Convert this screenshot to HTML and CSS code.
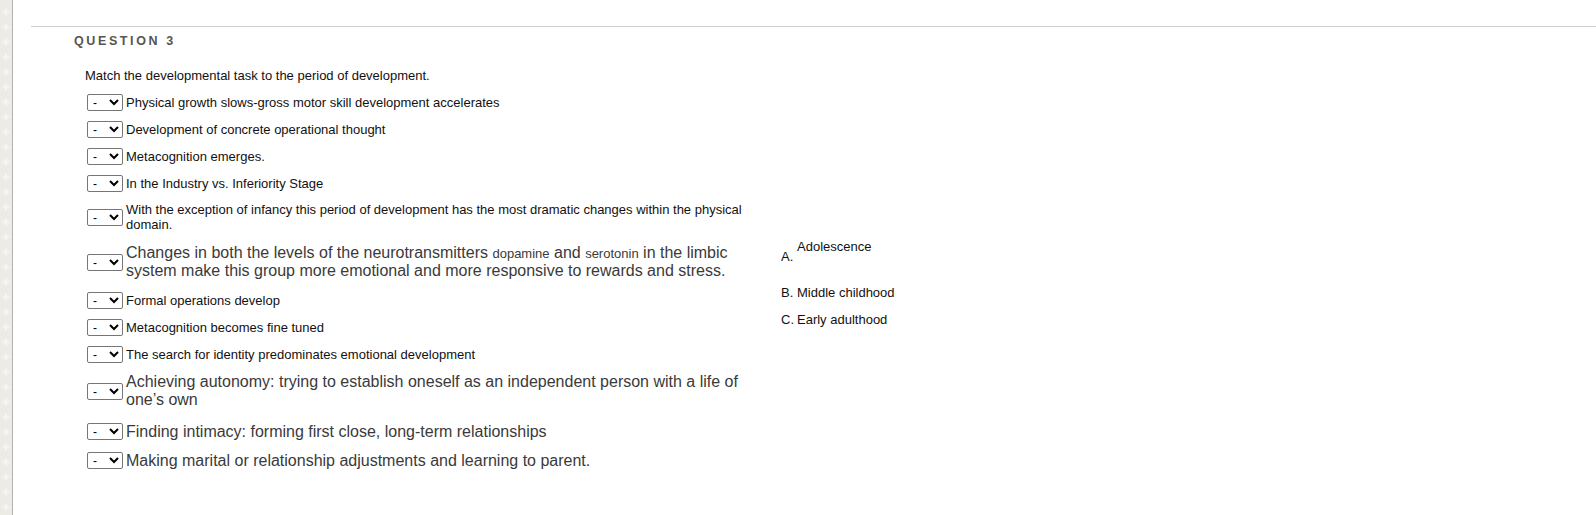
FILE: index.html
```html
<!DOCTYPE html>
<html lang="en">
<head>
<meta charset="utf-8">
<title>Question 3</title>
<link rel="stylesheet" href="styles.css">
</head>
<body>
<div class="page">
  <aside class="rail">
    <svg class="rail-art" width="12" height="515" aria-hidden="true">
      <defs>
        <pattern id="plus" x="0" y="4.5" width="12" height="15" patternUnits="userSpaceOnUse">
          <rect x="2.5" y="6.5" width="7" height="2" fill="#f6f5f1"/>
          <rect x="5" y="4" width="2" height="7" fill="#f6f5f1"/>
        </pattern>
      </defs>
      <rect width="12" height="515" fill="url(#plus)"/>
    </svg>
  </aside>
  <main class="main">
    <div class="rule"></div>
    <section class="question">
      <h3 class="qtitle">QUESTION 3</h3>
      <p class="prompt">Match the developmental task to the period of development.</p>
      <div class="match">
        <div class="items">
          <div class="row"><select class="pick"><option>-</option><option>A</option><option>B</option><option>C</option></select><span class="label">Physical growth slows-gross motor skill development accelerates</span></div>
          <div class="row"><select class="pick"><option>-</option><option>A</option><option>B</option><option>C</option></select><span class="label">Development of concrete operational thought</span></div>
          <div class="row"><select class="pick"><option>-</option><option>A</option><option>B</option><option>C</option></select><span class="label">Metacognition emerges.</span></div>
          <div class="row"><select class="pick"><option>-</option><option>A</option><option>B</option><option>C</option></select><span class="label">In the Industry vs. Inferiority Stage</span></div>
          <div class="row"><select class="pick"><option>-</option><option>A</option><option>B</option><option>C</option></select><span class="label">With the exception of infancy this period of development has the most dramatic changes within the physical domain.</span></div>
          <div class="row row-big2"><select class="pick"><option>-</option><option>A</option><option>B</option><option>C</option></select><span class="label big">Changes in both the levels of the neurotransmitters <span class="term">dopamine</span> and <span class="term">serotonin</span> in the limbic system make this group more emotional and more responsive to rewards and stress.</span></div>
          <div class="row"><select class="pick"><option>-</option><option>A</option><option>B</option><option>C</option></select><span class="label">Formal operations develop</span></div>
          <div class="row"><select class="pick"><option>-</option><option>A</option><option>B</option><option>C</option></select><span class="label">Metacognition becomes fine tuned</span></div>
          <div class="row"><select class="pick"><option>-</option><option>A</option><option>B</option><option>C</option></select><span class="label">The search for identity predominates emotional development</span></div>
          <div class="row row-big-wrap"><select class="pick"><option>-</option><option>A</option><option>B</option><option>C</option></select><span class="label big">Achieving autonomy: trying to establish oneself as an independent person with a life of one’s own</span></div>
          <div class="row row-big"><select class="pick"><option>-</option><option>A</option><option>B</option><option>C</option></select><span class="label big">Finding intimacy: forming first close, long-term relationships</span></div>
          <div class="row row-big"><select class="pick"><option>-</option><option>A</option><option>B</option><option>C</option></select><span class="label big">Making marital or relationship adjustments and learning to parent.</span></div>
        </div>
        <div class="answers">
          <div class="answer answer-raised"><span class="letter">A.</span><span class="choice">Adolescence</span></div>
          <div class="answer"><span class="letter">B.</span><span class="choice">Middle childhood</span></div>
          <div class="answer"><span class="letter">C.</span><span class="choice">Early adulthood</span></div>
        </div>
      </div>
    </section>
  </main>
</div>
</body>
</html>
```

FILE: styles.css
```css
html, body {
  margin: 0;
  padding: 0;
  background: #ffffff;
}

body {
  font-family: "Liberation Sans", Arial, sans-serif;
  font-size: 13px;
  color: #111111;
}

.page {
  display: flex;
  min-height: 515px;
}

.rail {
  flex: 0 0 12px;
  background: #edebe5;
  border-right: 1px solid #b3b1ad;
  overflow: hidden;
}

.rail-art {
  display: block;
}

.main {
  flex: 1 1 auto;
  padding-top: 26px;
}

.rule {
  margin-left: 18px;
  border-top: 1px solid #cfcfcf;
}

.question {
  margin-left: 61px;
}

.qtitle {
  margin: 7px 0 0 0;
  font-size: 12.5px;
  font-weight: bold;
  letter-spacing: 2.6px;
  color: #555555;
  line-height: normal;
}

.prompt {
  margin: 20px 0 0 11px;
  font-size: 13px;
  color: #111111;
}

.match {
  display: flex;
  margin: 6px 0 0 13px;
}

.items {
  width: 673px;
}

.row {
  display: flex;
  align-items: center;
  gap: 3px;
  padding: 5px 0;
}

.row-big2 {
  padding: 7px 0;
}

.row-big-wrap {
  padding: 5px 0 8px 0;
}

.row-big {
  padding: 5.5px 0;
}

.pick {
  flex: 0 0 36px;
  width: 36px;
  height: 17px;
  margin: 0;
  padding: 0 0 0 1px;
  font-family: "Liberation Sans", Arial, sans-serif;
  font-size: 12px;
  color: #000000;
  background: #ffffff;
  border: 1px solid #767676;
  border-radius: 2px;
}

.label {
  flex: 1 1 auto;
  font-size: 13px;
  color: #111111;
}

.label.big {
  font-size: 16px;
  color: #3a3a3a;
}

.term {
  font-size: 13px;
}

.answers {
  align-self: center;
  margin: 1px 0 0 21px;
}

.answer {
  display: flex;
  align-items: flex-start;
  padding: 6px 0;
  font-size: 13px;
  color: #111111;
}

.answer-raised {
  padding-bottom: 15px;
}

.letter {
  flex: 0 0 16px;
}

.answer-raised .letter {
  margin-top: 10px;
}
```
